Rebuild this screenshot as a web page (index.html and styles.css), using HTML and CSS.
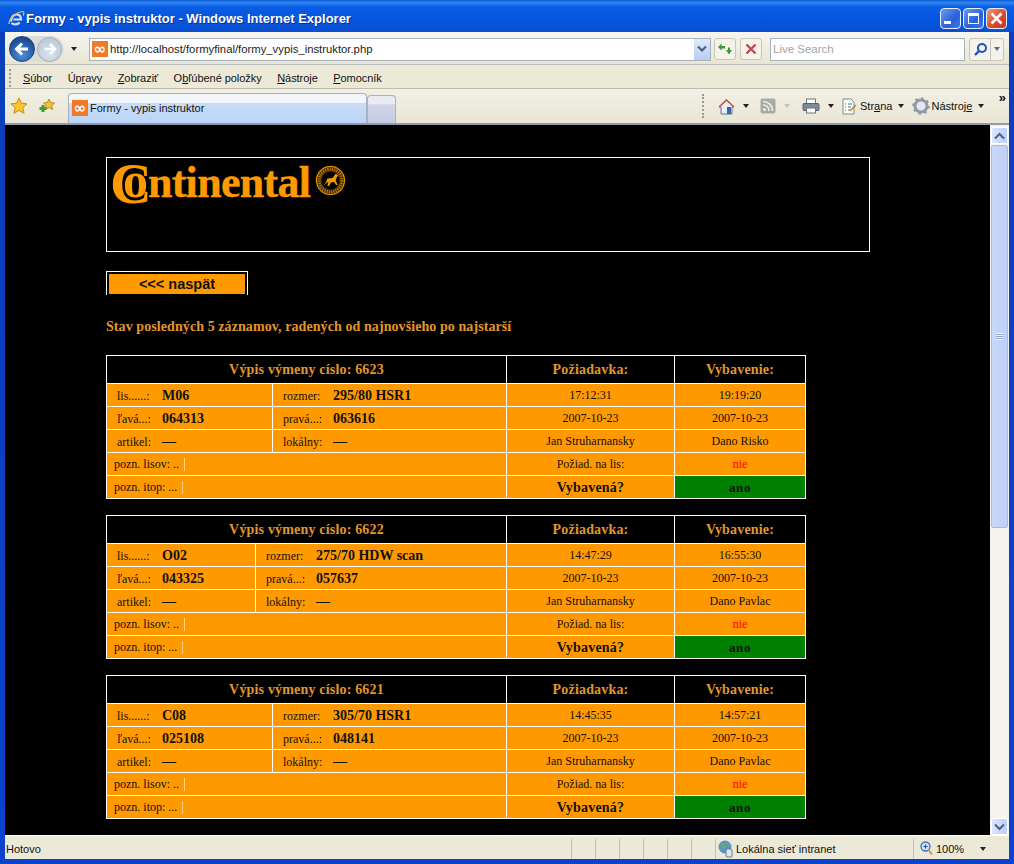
FILE: index.html
```html
<!DOCTYPE html>
<html lang="sk">
<head>
    <meta charset="UTF-8">
    <title>Formy - vypis instruktor</title>
    <link rel="stylesheet" href="styles.css">
</head>
<body>
<div class="window">
    <div class="titlebar">
        <svg class="ie-logo" width="18" height="18" viewBox="0 0 18 18"><path d="M4 11.500c0-4 2.500-7 5.500-7s4.500 2 4.500 5H6.500M4.500 13c2 2 6 2 8-.5" fill="none" stroke="#cfe0ff" stroke-width="2.200"/><path d="M2 14C2 8 10 2 15.500 1.500c2 0 1.500 2.500.5 4" fill="none" stroke="#f0c040" stroke-width="1.200"/></svg>
        <span class="title-text">Formy - vypis instruktor - Windows Internet Explorer</span>
        <div class="win-buttons">
            <div class="win-btn"><span class="glyph-min"></span></div>
            <div class="win-btn"><span class="glyph-max"></span></div>
            <div class="win-btn win-close">
                <svg width="15" height="15" viewBox="0 0 15 15"><path d="M2.500 2.500l10 10M12.500 2.500l-10 10" stroke="#fff" stroke-width="2.500"/></svg>
            </div>
        </div>
    </div>

    <div class="inner">
        <div class="addressbar">
            <div class="nav-buttons">
                <div class="nav-btn nav-back"><svg width="20" height="20" viewBox="0 0 20 20"><path d="M16 10H5M10 4.500L4.500 10l5.500 5.500" fill="none" stroke="#fff" stroke-width="3"/></svg></div>
                <div class="nav-btn nav-forward"><svg width="18" height="18" viewBox="0 0 20 20"><path d="M4 10h11M10 4.500l5.500 5.500-5.500 5.500" fill="none" stroke="#fff" stroke-width="3"/></svg></div>
            </div>
            <span class="arrow-down nav-drop"></span>
            <div class="url-box">
                <span class="favicon"><span class="favicon-mark">&#8734;</span></span>
                <span class="url-text">http://localhost/formyfinal/formy_vypis_instruktor.php</span>
                <span class="url-drop"><svg width="10" height="8" viewBox="0 0 10 8"><path d="M1 1.500l4 4 4-4" fill="none" stroke="#4a5a78" stroke-width="2"/></svg></span>
            </div>
            <div class="tool-btn"><svg width="16" height="14" viewBox="0 0 16 14"><path d="M1 5l3.500-3.500V4H8V6.500H4.500V8.500zM15 8l-3 4.500L9 8h2V5.500h2V8z" fill="#3a9a3a"/></svg></div>
            <div class="tool-btn"><svg width="12" height="12" viewBox="0 0 12 12"><path d="M1.500 1.500l9 9M10.500 1.500l-9 9" stroke="#c8454a" stroke-width="2.400"/></svg></div>
            <div class="search-box">Live Search</div>
            <div class="search-btn">
                <span class="search-icon"><svg width="15" height="15" viewBox="0 0 15 15"><circle cx="9" cy="6" r="4" fill="none" stroke="#1d50c0" stroke-width="2"/><path d="M6 9l-4 4" stroke="#1d50c0" stroke-width="2.400"/></svg></span>
                <span class="search-drop"><span class="arrow-down arrow-blue"></span></span>
            </div>
        </div>

        <div class="menubar">
            <span class="grip"></span>
            <span class="menu-item"><u>S</u>úbor</span>
            <span class="menu-item">Úp<u>r</u>avy</span>
            <span class="menu-item"><u>Z</u>obraziť</span>
            <span class="menu-item">O<u>b</u>ľúbené položky</span>
            <span class="menu-item"><u>N</u>ástroje</span>
            <span class="menu-item"><u>P</u>omocník</span>
        </div>

        <div class="tabbar">
            <svg class="star" width="18" height="18" viewBox="0 0 18 18"><path d="M9 1l2.400 5.200 5.600.6-4.200 3.800 1.200 5.600L9 13.400l-5 2.800 1.200-5.600L1 6.800l5.600-.6z" fill="#fbc52c" stroke="#c98a17"/></svg>
            <svg class="star star-add" width="18" height="18" viewBox="0 0 18 18"><path d="M11 2l1.700 3.600 3.800.5-2.800 2.600.8 3.800-3.500-2-3.500 2 .8-3.800-2.800-2.600 3.800-.5z" fill="#f2c23a" stroke="#b98a1a"/><path d="M5 8v7M1.500 11.500h7" stroke="#3f9e2e" stroke-width="3"/></svg>
            <div class="tab tab-active">
                <span class="favicon"><span class="favicon-mark">&#8734;</span></span>
                <span>Formy - vypis instruktor</span>
            </div>
            <div class="tab tab-new"></div>
            <div class="command-bar">
                <span class="grip grip-tall"></span>
                <svg class="cmd-icon" width="17" height="17" viewBox="0 0 17 17"><path d="M1 9l7.500-7L16 9h-2v7H3V9z" fill="#e9eef6" stroke="#5a7398"/><path d="M1 9l7.500-7L16 9" fill="none" stroke="#c8503f" stroke-width="1.500"/><rect x="9" y="9" width="4" height="7" fill="#3566b0"/></svg>
                <span class="arrow-down"></span>
                <svg class="cmd-icon cmd-feed" width="16" height="16" viewBox="0 0 16 16"><rect x=".5" y=".5" width="15" height="15" rx="2" fill="#a9aca6"/><circle cx="4.500" cy="11.500" r="1.500" fill="#eee"/><path d="M3 7c3.500 0 6 2.500 6 6M3 3.500c5.500 0 9.500 4 9.500 9.500" fill="none" stroke="#eee" stroke-width="1.700"/></svg>
                <span class="arrow-down arrow-faint"></span>
                <svg class="cmd-icon cmd-print" width="18" height="16" viewBox="0 0 18 16"><rect x="4.500" y="1" width="9" height="5" fill="#fff" stroke="#6b7585"/><rect x="1" y="5.500" width="16" height="7" rx="1" fill="#7f8a99" stroke="#5a6474"/><rect x="4.500" y="10" width="9" height="5" fill="#fff" stroke="#6b7585"/></svg>
                <span class="arrow-down"></span>
                <svg class="cmd-icon cmd-page" width="15" height="17" viewBox="0 0 15 17"><path d="M1 1h8l3 3v12H1z" fill="#fbfbf6" stroke="#7c8794"/><path d="M3 6h1M6 6h4M3 9h1M6 9h3M3 12h1M6 12h2" stroke="#5570a0"/><path d="M8 13l6-6" stroke="#b98a1a" stroke-width="1.500"/></svg>
                <span class="cmd-text">Str<u>a</u>na</span>
                <span class="arrow-down"></span>
                <svg class="cmd-icon cmd-gear" width="18" height="18" viewBox="0 0 18 18"><circle cx="9" cy="9" r="6" fill="none" stroke="#8e9aab" stroke-width="3"/><circle cx="9" cy="9" r="7.800" fill="none" stroke="#8e9aab" stroke-width="2" stroke-dasharray="2.500 3.600"/><circle cx="9" cy="9" r="3" fill="#dfeaf6"/></svg>
                <span class="cmd-text cmd-tools">Nástroj<u>e</u></span>
                <span class="arrow-down"></span>
                <span class="chevrons">&raquo;</span>
            </div>
        </div>

        <div class="viewport">
            <div class="page">
                <div class="logo-box">
                    <div class="logo">
                        <span class="logo-word"><span class="logo-c">C</span><span class="logo-o">o</span>ntinental</span>
                        <svg class="logo-seal" width="31" height="31" viewBox="0 0 30 30">
                            <circle cx="15" cy="15" r="14.500" fill="#3a2600"/>
                            <circle cx="15" cy="15" r="13.500" fill="none" stroke="#f39a00" stroke-width="1"/>
                            <circle cx="15" cy="15" r="11" fill="none" stroke="#b87500" stroke-width="3" stroke-dasharray="1.200 1"/>
                            <circle cx="15" cy="15" r="8.500" fill="#000"/>
                            <path d="M8 20l3-4 1-3 5-.5 3-4 2.500 1.500-1.500 2-1 3 2 4-1.500.5-2-3-3 .5-2 3.500-1.500-.5 1-3.500-2 1z" fill="#f39a00"/>
                        </svg>
                    </div>
                </div>

                <div class="back-button"><span>&lt;&lt;&lt; naspät</span></div>

                <h3 class="status-heading">Stav posledných 5 záznamov, radených od najnovšieho po najstarší</h3>

                <table class="record">
                    <colgroup><col class="col-a"><col class="col-b"><col class="col-c"><col class="col-d"></colgroup>
                    <tr class="head"><th colspan="2">Výpis výmeny císlo: 6623</th><th>Požiadavka:</th><th>Vybavenie:</th></tr>
                    <tr><td class="field"><span class="lbl lbl-a">lis......:</span><b>M06</b></td><td class="field"><span class="lbl lbl-b">rozmer:</span><b>295/80 HSR1</b></td><td>17:12:31</td><td>19:19:20</td></tr>
                    <tr><td class="field"><span class="lbl lbl-a">ľavá...:</span><b>064313</b></td><td class="field"><span class="lbl lbl-b">pravá...:</span><b>063616</b></td><td>2007-10-23</td><td>2007-10-23</td></tr>
                    <tr><td class="field"><span class="lbl lbl-a">artikel:</span><b>—</b></td><td class="field"><span class="lbl lbl-b">lokálny:</span><b>—</b></td><td>Jan Struharnansky</td><td>Dano Risko</td></tr>
                    <tr><td colspan="2" class="note">pozn. lisov: .. <span class="caret"></span></td><td>Požiad. na lis:</td><td class="no">nie</td></tr>
                    <tr><td colspan="2" class="note">pozn. itop: ... <span class="caret"></span></td><td class="asked">Vybavená?</td><td class="yes">ano</td></tr>
                </table>

                <table class="record record-narrow">
                    <colgroup><col class="col-a"><col class="col-b"><col class="col-c"><col class="col-d"></colgroup>
                    <tr class="head"><th colspan="2">Výpis výmeny císlo: 6622</th><th>Požiadavka:</th><th>Vybavenie:</th></tr>
                    <tr><td class="field"><span class="lbl lbl-a">lis......:</span><b>O02</b></td><td class="field"><span class="lbl lbl-b">rozmer:</span><b>275/70 HDW scan</b></td><td>14:47:29</td><td>16:55:30</td></tr>
                    <tr><td class="field"><span class="lbl lbl-a">ľavá...:</span><b>043325</b></td><td class="field"><span class="lbl lbl-b">pravá...:</span><b>057637</b></td><td>2007-10-23</td><td>2007-10-23</td></tr>
                    <tr><td class="field"><span class="lbl lbl-a">artikel:</span><b>—</b></td><td class="field"><span class="lbl lbl-b">lokálny:</span><b>—</b></td><td>Jan Struharnansky</td><td>Dano Pavlac</td></tr>
                    <tr><td colspan="2" class="note">pozn. lisov: .. <span class="caret"></span></td><td>Požiad. na lis:</td><td class="no">nie</td></tr>
                    <tr><td colspan="2" class="note">pozn. itop: ... <span class="caret"></span></td><td class="asked">Vybavená?</td><td class="yes">ano</td></tr>
                </table>

                <table class="record">
                    <colgroup><col class="col-a"><col class="col-b"><col class="col-c"><col class="col-d"></colgroup>
                    <tr class="head"><th colspan="2">Výpis výmeny císlo: 6621</th><th>Požiadavka:</th><th>Vybavenie:</th></tr>
                    <tr><td class="field"><span class="lbl lbl-a">lis......:</span><b>C08</b></td><td class="field"><span class="lbl lbl-b">rozmer:</span><b>305/70 HSR1</b></td><td>14:45:35</td><td>14:57:21</td></tr>
                    <tr><td class="field"><span class="lbl lbl-a">ľavá...:</span><b>025108</b></td><td class="field"><span class="lbl lbl-b">pravá...:</span><b>048141</b></td><td>2007-10-23</td><td>2007-10-23</td></tr>
                    <tr><td class="field"><span class="lbl lbl-a">artikel:</span><b>—</b></td><td class="field"><span class="lbl lbl-b">lokálny:</span><b>—</b></td><td>Jan Struharnansky</td><td>Dano Pavlac</td></tr>
                    <tr><td colspan="2" class="note">pozn. lisov: .. <span class="caret"></span></td><td>Požiad. na lis:</td><td class="no">nie</td></tr>
                    <tr><td colspan="2" class="note">pozn. itop: ... <span class="caret"></span></td><td class="asked">Vybavená?</td><td class="yes">ano</td></tr>
                </table>
            </div>

            <div class="scrollbar">
                <div class="sb-btn"><svg width="11" height="8" viewBox="0 0 11 8"><path d="M1 6.500l4.500-4.500 4.500 4.500" fill="none" stroke="#4d6185" stroke-width="2"/></svg></div>
                <div class="sb-thumb"><span class="sb-lines"></span></div>
                <div class="sb-track"></div>
                <div class="sb-btn"><svg width="11" height="8" viewBox="0 0 11 8"><path d="M1 1.500l4.500 4.500 4.500-4.500" fill="none" stroke="#4d6185" stroke-width="2"/></svg></div>
            </div>
        </div>

        <div class="statusbar">
            <span class="status-text">Hotovo</span>
            <span class="status-cell"></span>
            <span class="status-cell"></span>
            <span class="status-cell"></span>
            <span class="status-cell"></span>
            <span class="status-cell"></span>
            <span class="status-cell"></span>
            <span class="status-cell status-zone">
                <svg width="18" height="18" viewBox="0 0 18 18"><circle cx="8" cy="7" r="6.500" fill="#5b93c9"/><path d="M4 3l4 1 1 3-3 2-2-2zM10 2l3 2-1 3-2-2z" fill="#6dae5e"/><rect x="9" y="9" width="6" height="8" rx="1" fill="#dfe5ec" stroke="#6d7b8c"/></svg>
                <span>Lokálna sieť intranet</span>
            </span>
            <span class="status-cell status-zoom">
                <svg width="13" height="15" viewBox="0 0 13 15"><circle cx="5.500" cy="5.500" r="4.500" fill="#cfe0f5" stroke="#3c70b8" stroke-width="1.300"/><path d="M3.500 5.500h4M5.500 3.500v4" stroke="#1e4f9c"/><path d="M8.500 9l3.500 4.500" stroke="#c79a4a" stroke-width="2"/></svg>
                <span>100%</span>
                <span class="arrow-down arrow-small"></span>
            </span>
        </div>
    </div>
</div>
</body>
</html>
```

FILE: styles.css
```css
html, body {
    margin: 0;
    height: 100%;
    overflow: hidden;
}
body {
    font-family: "Liberation Sans", Arial, sans-serif;
    background-color: #0a3fc4;
}

/* okno */
.window {
    width: 1014px;
    height: 864px;
    display: flex;
    flex-direction: column;
    background: linear-gradient(to bottom, #0a3fb8, #0a43cf);
    box-sizing: border-box;
}
.titlebar {
    height: 32px;
    flex: none;
    display: flex;
    align-items: center;
    padding: 5px 7px 0 7px;
    box-sizing: border-box;
    background: linear-gradient(to bottom, #0d5bd8 0%, #2f86f2 8%, #0a5ce4 22%, #0555df 60%, #0a4fd0 100%);
    color: #fff;
}
.ie-logo {
    margin-right: 1px;
}
.title-text {
    font-size: 13px;
    font-weight: bold;
    text-shadow: 1px 1px 0 #0a2f90;
    flex: 1;
}
.win-buttons {
    display: flex;
    gap: 2px;
    margin-top: -1px;
}
.win-btn {
    width: 21px;
    height: 21px;
    border: 1px solid #e8eefc;
    border-radius: 4px;
    box-sizing: border-box;
    background: linear-gradient(135deg, #6c9cf0, #2a5fd8 60%, #3f78e6);
    display: flex;
    align-items: center;
    justify-content: center;
}
.win-close {
    background: linear-gradient(135deg, #eb9a80, #d9482a 60%, #c8361c);
}
.glyph-min {
    width: 7px;
    height: 3px;
    background: #fff;
    margin-top: 9px;
    margin-right: 6px;
}
.glyph-max {
    width: 9px;
    height: 7px;
    border: 1px solid #fff;
    border-top-width: 3px;
}
.inner {
    flex: 1;
    min-height: 0;
    margin: 0 5px 5px 5px;
    display: flex;
    flex-direction: column;
    background: #ece9d8;
}

/* adresa */
.addressbar {
    height: 33px;
    flex: none;
    display: flex;
    align-items: center;
    padding: 2px 0 0 4px;
    background: linear-gradient(to bottom, #f8f6ee, #e8e5d4);
    box-sizing: border-box;
    border-bottom: 1px solid #b9bdb9;
}
.nav-buttons {
    display: flex;
    width: 55px;
    height: 26px;
    border-radius: 13px;
    background: #dcdcd8;
    align-items: center;
}
.nav-btn {
    border-radius: 50%;
    display: flex;
    align-items: center;
    justify-content: center;
    flex: none;
}
.nav-back {
    width: 26px;
    height: 26px;
    background: radial-gradient(circle at 50% 75%, #4f8ed8, #1b4b94 75%);
    border: 1px solid #1c3e78;
    box-sizing: border-box;
}
.nav-forward {
    width: 25px;
    height: 25px;
    margin-left: 2px;
    background: radial-gradient(circle at 50% 70%, #d6e2ee, #b6c3d2);
    border: 1px solid #a2aeb9;
    box-sizing: border-box;
}
.arrow-down {
    width: 0;
    height: 0;
    border-left: 3px solid transparent;
    border-right: 3px solid transparent;
    border-top: 4px solid #222;
    flex: none;
}
.arrow-faint {
    border-top-color: #c4c3b4;
}
.arrow-blue {
    border-top-color: #4a6fa5;
}
.nav-drop {
    margin: 0 12px 0 7px;
}
.url-box {
    width: 622px;
    height: 23px;
    flex: none;
    background: #fff;
    border: 1px solid #a5b1bd;
    box-sizing: border-box;
    display: flex;
    align-items: center;
    padding-left: 2px;
    font-size: 11.300px;
    color: #222;
}
.favicon {
    width: 16px;
    height: 16px;
    background: #f07a2a;
    color: #fff;
    display: inline-flex;
    align-items: center;
    justify-content: center;
    margin-right: 2px;
    flex: none;
}
.favicon-mark {
    font-size: 15px;
    line-height: 16px;
    font-weight: bold;
    font-family: "DejaVu Sans", sans-serif;
}
.url-text {
    flex: 1;
}
.url-drop {
    width: 16px;
    height: 21px;
    background: linear-gradient(to bottom, #dfe9f9, #b8cdef);
    display: flex;
    align-items: center;
    justify-content: center;
}
.tool-btn {
    width: 22px;
    height: 22px;
    margin-left: 3px;
    border: 1px solid #c4c6bb;
    border-radius: 3px;
    box-sizing: border-box;
    display: flex;
    align-items: center;
    justify-content: center;
    background: #f4f2e9;
}
.tool-btn + .tool-btn {
    margin-left: 4px;
}
.search-box {
    width: 195px;
    height: 23px;
    flex: none;
    margin-left: 8px;
    background: #fff;
    border: 1px solid #a5b1bd;
    box-sizing: border-box;
    font-size: 11.500px;
    color: #a5a5a5;
    line-height: 21px;
    padding-left: 2px;
}
.search-btn {
    display: flex;
    margin-left: 4px;
    height: 21px;
    border: 1px solid #c4c6bb;
    border-radius: 3px;
    background: #f4f2e9;
}
.search-icon {
    width: 20px;
    display: flex;
    align-items: center;
    justify-content: center;
    border-right: 1px solid #c4c6bb;
}
.search-drop {
    width: 12px;
    display: flex;
    align-items: center;
    justify-content: center;
}

/* menu */
.menubar {
    height: 24px;
    flex: none;
    display: flex;
    align-items: center;
    padding: 2px 0 0 4px;
    font-size: 11px;
    letter-spacing: -0.05px;
    color: #111;
    background: #ece9d8;
    box-sizing: border-box;
    border-bottom: 1px solid #bdbcae;
}
.grip {
    width: 2px;
    height: 18px;
    border-left: 2px dotted #9a9a90;
    margin-right: 10px;
}
.grip-tall {
    height: 24px;
    margin-right: 12px;
}
.menu-item {
    margin-right: 15.500px;
    white-space: nowrap;
}

/* taby */
.tabbar {
    height: 36px;
    flex: none;
    display: flex;
    align-items: flex-end;
    padding-left: 5px;
    background: linear-gradient(to bottom, #f2f0e4, #e9e6d5);
    font-size: 11px;
    color: #111;
    box-sizing: border-box;
    border-bottom: 2px solid #8e9ab0;
}
.star {
    align-self: center;
    margin-right: 10px;
}
.star-add {
    margin-right: 12px;
}
.tab {
    box-sizing: border-box;
    border: 1px solid #a8b2c2;
    border-bottom: none;
    border-radius: 4px 4px 0 0;
}
.tab-active {
    width: 299px;
    height: 30px;
    display: flex;
    align-items: center;
    padding: 0 0 2px 3px;
    background: linear-gradient(to bottom, #f3f6fb 0%, #f3f6fb 30%, #c8dcf8 32%, #bcd4f6 100%);
    font-size: 11px;
}
.tab-active .favicon {
    margin-right: 2px;
}
.tab-new {
    width: 29px;
    height: 28px;
    background: linear-gradient(to bottom, #e9ebf0 0%, #e9ebf0 30%, #cfd5e6 32%, #c6cde2 100%);
}
.command-bar {
    flex: 1;
    align-self: stretch;
    display: flex;
    align-items: center;
    padding-left: 306px;
    font-size: 11px;
    position: relative;
}
.command-bar .arrow-down {
    margin: 0 8px;
}
.cmd-feed {
    margin-left: 3px;
}
.cmd-print {
    margin-left: 4px;
}
.cmd-text {
    margin-left: 3px;
}
.command-bar .cmd-text + .arrow-down {
    margin: 0 6px;
}
.cmd-gear {
    margin-left: 2px;
}
.cmd-tools {
    margin-left: 1px;
}
.chevrons {
    position: absolute;
    right: 3px;
    top: 1px;
    font-size: 13px;
    font-weight: bold;
}

/* stranka */
.viewport {
    flex: 1;
    min-height: 0;
    display: flex;
    background: #000;
    overflow: hidden;
}
.page {
    flex: 1;
    min-width: 0;
    padding: 32px 0 0 101px;
    font-family: "Liberation Serif", "Times New Roman", serif;
    overflow: hidden;
}
.logo-box {
    width: 764px;
    height: 95px;
    box-sizing: border-box;
    border: 1px solid #fff;
    padding: 0 3px;
}
.logo {
    display: flex;
    align-items: flex-start;
    height: 50px;
}
.logo-word {
    color: #f90;
    font-size: 44px;
    font-weight: bold;
    line-height: 50px;
    letter-spacing: -0.7px;
    white-space: nowrap;
    -webkit-text-stroke: 0.4px #f90;
}
.logo-c {
    font-size: 58px;
    letter-spacing: 0;
    vertical-align: -6px;
    line-height: 0;
    -webkit-text-stroke: 0;
}
.logo-o {
    font-size: 50px;
    letter-spacing: 0;
    margin-left: -29px;
    line-height: 0;
    -webkit-text-stroke: 0;
    text-shadow: -2px 0 0 #000;
}
.logo-seal {
    margin: 7px 0 0 5px;
}
.back-button {
    width: 142px;
    height: 24px;
    margin-top: 19px;
    box-sizing: border-box;
    border: 1px solid #fff;
    border-bottom: none;
    padding: 2px 2px 0;
}
.back-button span {
    display: block;
    height: 20px;
    background: #f90;
    color: #111;
    text-align: center;
    font: bold 14.500px/20px "Liberation Sans", Arial, sans-serif;
}
.status-heading {
    margin: 24px 0 20px;
    color: #e0962a;
    font-size: 14px;
    line-height: 16px;
    font-weight: bold;
    letter-spacing: 0.08px;
}
.record {
    width: 699px;
    table-layout: fixed;
    border-collapse: collapse;
    margin-bottom: 16px;
    background: #f90;
    color: #111;
    font-size: 12px;
    text-align: center;
}
.record .col-a { width: 166px; }
.record .col-b { width: 234px; }
.record .col-c { width: 168px; }
.record .col-d { width: 131px; }
.record-narrow .col-a { width: 149px; }
.record-narrow .col-b { width: 251px; }
.record th, .record td {
    border: 1px solid #fff;
    padding: 0;
    height: 22px;
}
.record td {
    box-sizing: border-box;
    height: 23px;
    padding-top: 1px;
}
.record th {
    background: #000;
    color: #e0962a;
    font-size: 14px;
    height: 27px;
    letter-spacing: 0.18px;
}
.record td.field, .record td.note {
    text-align: left;
    white-space: nowrap;
}
.record td.field b {
    font-size: 14px;
}
.lbl {
    display: inline-block;
}
.lbl-a {
    padding-left: 10px;
    width: 45px;
}
.lbl-b {
    padding-left: 10px;
    width: 50px;
}
.record td.note {
    padding-left: 7px;
}
.caret {
    display: inline-block;
    width: 1px;
    height: 13px;
    margin-left: 2px;
    background: #ffd98a;
    vertical-align: -3px;
}
.record td.no {
    color: #f00;
}
.record td.asked {
    font-size: 14px;
    font-weight: bold;
    letter-spacing: 0.2px;
}
.record td.yes {
    background: #008000;
    font-size: 13px;
    font-weight: bold;
    letter-spacing: 0.6px;
}

/* scrollbar */
.scrollbar {
    width: 17px;
    flex: none;
    padding: 2px 1px 0;
    background: #f4f3ec;
    display: flex;
    flex-direction: column;
    gap: 1px;
}
.sb-btn {
    height: 17px;
    flex: none;
    background: linear-gradient(to right, #dbe6fc, #bccffa);
    border: 1px solid #fff;
    border-radius: 2px;
    box-sizing: border-box;
    display: flex;
    align-items: center;
    justify-content: center;
}
.sb-thumb {
    height: 383px;
    flex: none;
    background: linear-gradient(to right, #c9d8fa, #bed0f8);
    border: 1px solid #fff;
    outline: 1px solid #aebbd6;
    outline-offset: -1px;
    border-radius: 2px;
    box-sizing: border-box;
    display: flex;
    align-items: center;
    justify-content: center;
}
.sb-lines {
    width: 7px;
    height: 7px;
    background: repeating-linear-gradient(to bottom, #eef3ff 0, #eef3ff 1px, #8ea6d6 1px, #8ea6d6 2px);
}
.sb-track {
    flex: 1;
}

/* status */
.statusbar {
    height: 24px;
    flex: none;
    display: flex;
    align-items: center;
    padding-top: 2px;
    background: #ece9d8;
    border-top: 1px solid #fff;
    font-size: 11px;
    color: #111;
    box-sizing: border-box;
}
.status-text {
    flex: none;
    width: 566px;
    padding-left: 1px;
    box-sizing: border-box;
}
.status-cell {
    height: 20px;
    width: 24px;
    flex: none;
    border-left: 1px solid #c3c1b0;
    box-sizing: border-box;
}
.status-zone {
    width: 198px;
    display: flex;
    align-items: center;
    gap: 1px;
    padding-left: 1px;
}
.status-zoom {
    width: 94px;
    display: flex;
    align-items: center;
    gap: 3px;
    padding-left: 6px;
}
.arrow-small {
    margin-left: 13px;
}
```
